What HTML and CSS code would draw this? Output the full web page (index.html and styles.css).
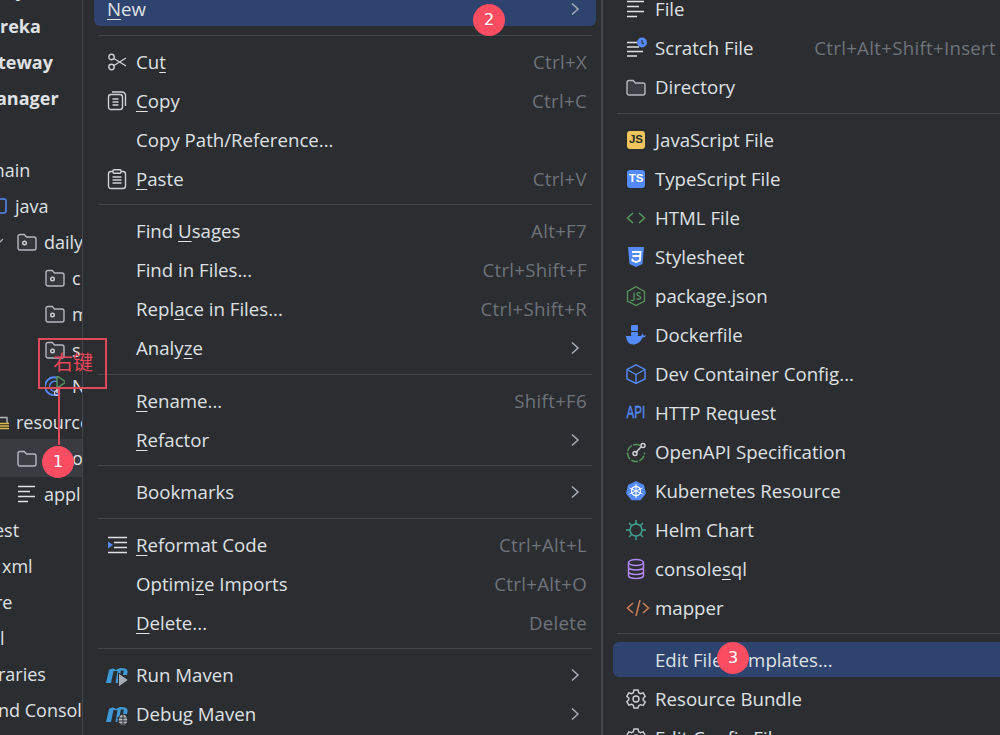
FILE: index.html
```html
<!DOCTYPE html>
<html lang="en">
<head>
<meta charset="utf-8">
<title>New file menu</title>
<link rel="stylesheet" href="styles.css">
</head>
<body>
<svg class="defs" width="0" height="0" aria-hidden="true">
  <symbol id="folder" viewBox="0 0 20 20"><path d="M1 5.500A2 2 0 0 1 3 3.500h4.200l2.300 2.500H17a2 2 0 0 1 2 2v8a2 2 0 0 1-2 2H3a2 2 0 0 1-2-2z" fill="#3c3e43" stroke="#b4b8bf" stroke-width="1.400"/></symbol>
  <symbol id="pkg" viewBox="0 0 20 20"><path d="M1 4.500A2 2 0 0 1 3 2.500h4.200l2.300 2.500H17a2 2 0 0 1 2 2v9a2 2 0 0 1-2 2H3a2 2 0 0 1-2-2z" fill="#34363a" stroke="#b4b8bf" stroke-width="1.400"/><circle cx="7.500" cy="11" r="1.800" fill="none" stroke="#ced0d6" stroke-width="1.400"/></symbol>
  <symbol id="file" viewBox="0 0 20 20" stroke="#dfe1e5" stroke-width="1.500"><path d="M1 2.500h17M1 7.500h12M1 12.500h17M1 17.500h10"/></symbol>
  <symbol id="chev" viewBox="0 0 10 14"><path d="M2 1.500 8 7l-6 5.500" fill="none" stroke="#a8adb6" stroke-width="1.500"/></symbol>
</svg>

<div class="screen">
  <aside class="tree">
    <div class="node bold in-10">ly</div>
    <div class="node bold">reka</div>
    <div class="node bold out-2">teway</div>
    <div class="node bold out-4">anager</div>
    <div class="node"></div>
    <div class="node out-12">main</div>
    <div class="node javarow">
      <svg class="tree-ic" viewBox="0 0 20 20"><rect x="1" y="3" width="11" height="14" rx="2" fill="none" stroke="#548af7" stroke-width="1.500"/></svg>
      <span>java</span>
    </div>
    <div class="node d2">
      <svg class="tw" viewBox="0 0 10 14"><path d="M1 4l4 4 4-4" fill="none" stroke="#a8adb6" stroke-width="1.300"/></svg>
      <svg class="tree-ic"><use href="#pkg"/></svg><span>daily</span>
    </div>
    <div class="node d3"><svg class="tree-ic"><use href="#pkg"/></svg><span>c</span></div>
    <div class="node d3"><svg class="tree-ic"><use href="#pkg"/></svg><span>m</span></div>
    <div class="node d3"><svg class="tree-ic"><use href="#pkg"/></svg><span>s</span></div>
    <div class="node d3">
      <svg class="tree-ic" viewBox="0 0 20 20"><path d="M15 3.500A9 9 0 1 0 15 17" fill="none" stroke="#548af7" stroke-width="1.800"/><path d="M13 6.500A5 5 0 1 0 13 14" fill="none" stroke="#548af7" stroke-width="1.500"/><path d="M12 0l9 6-9 6z" fill="#2b2d30" stroke="#57965c" stroke-width="1.500"/><path d="M12 13v4" stroke="#ced0d6" stroke-width="1.500"/><circle cx="12" cy="17" r="2.500" fill="none" stroke="#ced0d6" stroke-width="1.200"/></svg>
      <span>N</span>
    </div>
    <div class="node resrow">
      <svg class="tree-ic" viewBox="0 0 20 20"><path d="M1 5.500h12v6" fill="none" stroke="#b4b8bf" stroke-width="1.400"/><path d="M1 11.500h14M1 14h14M1 16.500h14" stroke="#e0b94c" stroke-width="1.500"/></svg>
      <span>resource</span>
    </div>
    <div class="node d2 selected"><svg class="tree-ic"><use href="#folder"/></svg><span class="gap-o">o</span></div>
    <div class="node d2"><svg class="tree-ic"><use href="#file"/></svg><span>appl</span></div>
    <div class="node out-6">est</div>
    <div class="node in-2">xml</div>
    <div class="node out-5">re</div>
    <div class="node">l</div>
    <div class="node out-2">raries</div>
    <div class="node out-2">nd Consol</div>
  </aside>

  <section class="menu first">
    <div class="row hot"><span class="label"><u>N</u>ew</span><svg class="chev"><use href="#chev"/></svg></div>
    <div class="sep tall"></div>
    <div class="row">
      <svg class="ic" viewBox="0 0 20 20" fill="none" stroke="#ced0d6" stroke-width="1.400"><circle cx="4.500" cy="5" r="2.700"/><circle cx="4.500" cy="15" r="2.700"/><path d="M7 6.500 19 14M7 13.500 19 6"/></svg>
      <span class="label">Cu<u>t</u></span><span class="key">Ctrl+X</span>
    </div>
    <div class="row">
      <svg class="ic" viewBox="0 0 20 20" fill="none" stroke="#ced0d6" stroke-width="1.400"><rect x="1.500" y="3.500" width="14" height="15" rx="2.500"/><path d="M5 1h10a3.500 3.500 0 0 1 3.500 3.500V15M5.500 8h6M5.500 11h6M5.500 14h6"/></svg>
      <span class="label"><u>C</u>opy</span><span class="key">Ctrl+C</span>
    </div>
    <div class="row"><span class="spacer"></span><span class="label">Copy Path/Reference...</span></div>
    <div class="row">
      <svg class="ic" viewBox="0 0 20 20" fill="none" stroke="#ced0d6" stroke-width="1.400"><rect x="1.500" y="2.500" width="17" height="17" rx="2.500"/><rect x="6" y="0.800" width="8" height="3.500" rx="1" fill="#2b2d30"/><path d="M5.500 8h9M5.500 11h9M5.500 14h9"/></svg>
      <span class="label"><u>P</u>aste</span><span class="key">Ctrl+V</span>
    </div>
    <div class="sep"></div>
    <div class="row"><span class="spacer"></span><span class="label">Find <u>U</u>sages</span><span class="key">Alt+F7</span></div>
    <div class="row"><span class="spacer"></span><span class="label">Find in Files...</span><span class="key">Ctrl+Shift+F</span></div>
    <div class="row"><span class="spacer"></span><span class="label">Repl<u>a</u>ce in Files...</span><span class="key">Ctrl+Shift+R</span></div>
    <div class="row"><span class="spacer"></span><span class="label">Analy<u>z</u>e</span><svg class="chev"><use href="#chev"/></svg></div>
    <div class="sep tall"></div>
    <div class="row"><span class="spacer"></span><span class="label"><u>R</u>ename...</span><span class="key">Shift+F6</span></div>
    <div class="row"><span class="spacer"></span><span class="label"><u>R</u>efactor</span><svg class="chev"><use href="#chev"/></svg></div>
    <div class="sep"></div>
    <div class="row"><span class="spacer"></span><span class="label">Bookmarks</span><svg class="chev"><use href="#chev"/></svg></div>
    <div class="sep tall"></div>
    <div class="row">
      <svg class="ic" viewBox="0 0 20 20" stroke="#dfe1e5" stroke-width="1.500"><path d="M1 2.500h19M7 7.500h13M7 12.500h13M1 17.500h19"/><path d="M1 6.500l5 3.500-5 3.500z" fill="#548af7" stroke="none"/></svg>
      <span class="label"><u>R</u>eformat Code</span><span class="key">Ctrl+Alt+L</span>
    </div>
    <div class="row"><span class="spacer"></span><span class="label">Optimi<u>z</u>e Imports</span><span class="key">Ctrl+Alt+O</span></div>
    <div class="row"><span class="spacer"></span><span class="label"><u>D</u>elete...</span><span class="key">Delete</span></div>
    <div class="sep"></div>
    <div class="row">
      <svg class="ic" viewBox="0 0 20 20"><path d="M-1 18 2 5c3-2 5-2 7 0 3-2.500 6-2.500 9-1.500 2 .7 3 2 2.500 4L20 10h-4l.8-4.500h-3L12 18H8.500L10.500 6H6.500L4 18z" fill="#3d9ad6"/><path d="M11.500 8l10 7-10 7z" fill="#a8adb6" stroke="#2b2d30" stroke-width="1"/></svg>
      <span class="label">Run Maven</span><svg class="chev"><use href="#chev"/></svg>
    </div>
    <div class="row">
      <svg class="ic" viewBox="0 0 20 20"><path d="M-1 18 2 5c3-2 5-2 7 0 3-2.500 6-2.500 9-1.500 2 .7 3 2 2.500 4L20 10h-4l.8-4.500h-3L12 18H8.500L10.500 6H6.500L4 18z" fill="#3d9ad6"/><ellipse cx="16" cy="16" rx="4.800" ry="5.800" fill="#b4b8bf" stroke="#2b2d30" stroke-width="1"/><path d="M10 14h12M10 17h12M10 20h12M16 11v11" stroke="#2b2d30" stroke-width="1"/></svg>
      <span class="label">Debug Maven</span><svg class="chev"><use href="#chev"/></svg>
    </div>
  </section>

  <section class="menu second">
    <div class="row"><svg class="ic"><use href="#file"/></svg><span class="label">File</span></div>
    <div class="row">
      <svg class="ic" viewBox="0 0 20 20" stroke="#dfe1e5" stroke-width="1.500"><path d="M1 4.500h10M1 9h12M1 13.500h16M1 18h10"/><circle cx="16" cy="4.500" r="5" fill="#548af7" stroke="none"/><path d="M16 2v3l2 1" fill="none" stroke="#2b2d30" stroke-width="1.200"/></svg>
      <span class="label">Scratch File</span><span class="key">Ctrl+Alt+Shift+Insert</span>
    </div>
    <div class="row"><svg class="ic"><use href="#folder"/></svg><span class="label">Directory</span></div>
    <div class="sep tall"></div>
    <div class="row"><span class="chip js">JS</span><span class="label">JavaScript File</span></div>
    <div class="row"><span class="chip ts">TS</span><span class="label">TypeScript File</span></div>
    <div class="row">
      <svg class="ic" viewBox="0 0 20 20" fill="none" stroke="#57965c" stroke-width="1.600"><path d="M7 5 1.500 10 7 15M13 5l5.500 5-5.500 5"/></svg>
      <span class="label">HTML File</span>
    </div>
    <div class="row">
      <svg class="ic" viewBox="0 0 20 20"><path d="M2 0h16l-1.500 17L10 20l-6.500-3z" fill="#548af7"/><path d="M6 5h8.500l-.6 8.500L10 15l-3.500-1.300-.1-2M6.500 9H14" fill="none" stroke="#fff" stroke-width="1.800"/></svg>
      <span class="label">Stylesheet</span>
    </div>
    <div class="row">
      <svg class="ic" viewBox="0 0 20 20" fill="none" stroke="#57965c" stroke-width="1.300"><path d="M10 .8 18.500 5.500v9.500L10 19.500 1.500 15V5.500z"/><path d="M8 6.500v7c0 1.500-2.500 1.500-3 .3M14.500 7.500c-1-1.300-3.700-1-3.700.7 0 2.200 3.900 1.200 3.900 3.500 0 1.800-3 2-4.200.6"/></svg>
      <span class="label">package.json</span>
    </div>
    <div class="row">
      <svg class="ic" viewBox="0 0 20 20" fill="#548af7"><rect x="5" y="0" width="7" height="6" rx="1"/><rect x="5" y="7" width="7" height="4" rx="1"/><path d="M0 11h15c.5-1.500 1.500-2.500 2-2.500 .3 1 .3 1.500 .3 2h2.700c-.5 1.500-2 2-3.500 2C15 17 11 19.500 7 19.500 3 19.500 .5 16 0 11z"/></svg>
      <span class="label">Dockerfile</span>
    </div>
    <div class="row">
      <svg class="ic" viewBox="0 0 20 20" fill="none" stroke="#548af7" stroke-width="1.400"><path d="M10 .8 19 5.500V15L10 19.500 1 15V5.500zM1 5.500 10 10.500l9-5M10 10.500v9"/></svg>
      <span class="label">Dev Container Config...</span>
    </div>
    <div class="row"><span class="chip api"><span class="api-text">API</span></span><span class="label">HTTP Request</span></div>
    <div class="row">
      <svg class="ic" viewBox="0 0 20 20" fill="none" stroke-width="1.500"><path d="M14 3.500A8.500 8.500 0 1 0 18.500 10.500" stroke="#57965c" stroke-dasharray="7 1.500"/><path d="M9.500 11 15 5" stroke="#ced0d6"/><circle cx="9" cy="11.500" r="2" stroke="#ced0d6"/><circle cx="17" cy="3.500" r="2" stroke="#ced0d6"/></svg>
      <span class="label">OpenAPI Specification</span>
    </div>
    <div class="row">
      <svg class="ic" viewBox="0 0 20 20"><path d="M10 0 18 4l2 8.500-5.500 6.800h-9L0 12.500 2 4z" fill="#548af7"/><circle cx="10" cy="10" r="4.500" fill="none" stroke="#fff" stroke-width="1.300"/><path d="M10 3v14M3.500 7l13 6M3.500 13l13-6" stroke="#fff" stroke-width="1"/></svg>
      <span class="label">Kubernetes Resource</span>
    </div>
    <div class="row">
      <svg class="ic" viewBox="0 0 20 20" fill="none" stroke="#3fa190" stroke-width="1.500"><circle cx="10" cy="10" r="6"/><path d="M10 0v4M10 16v4M0 10h4M16 10h4M3 3l2.500 2.500M14.500 14.500 17 17M17 3l-2.500 2.500M5.500 14.500 3 17"/></svg>
      <span class="label">Helm Chart</span>
    </div>
    <div class="row">
      <svg class="ic" viewBox="0 0 20 20" fill="none" stroke="#b189f5" stroke-width="1.500"><ellipse cx="10" cy="3.500" rx="7.500" ry="3"/><path d="M2.500 3.500v13c0 1.700 3.400 3 7.500 3s7.500-1.300 7.500-3v-13M2.500 8c0 1.700 3.400 3 7.500 3s7.500-1.300 7.500-3M2.500 12.500c0 1.700 3.400 3 7.500 3s7.500-1.300 7.500-3"/></svg>
      <span class="label">console<u>s</u>ql</span>
    </div>
    <div class="row">
      <svg class="ic wide" viewBox="0 0 24 20" fill="none" stroke="#c77d55" stroke-width="1.600"><path d="M7 5 1.500 10 7 15M17 5l5.500 5-5.500 5M14 2 10 18"/></svg>
      <span class="label">mapper</span>
    </div>
    <div class="sep"></div>
    <div class="row hot"><span class="spacer"></span><span class="label">Edit File Templates...</span></div>
    <div class="row">
      <svg class="ic" viewBox="0 0 20 20" fill="none" stroke="#ced0d6" stroke-width="1.400"><path d="M8 1h4l.7 2.700 1.800 1 2.700-.8 2 3.400-2 2 0 1.800 2 2-2 3.400-2.700-.8-1.800 1L12 19H8l-.7-2.700-1.800-1-2.700.8-2-3.400 2-2V9L.800 7.300l2-3.400 2.700.8 1.800-1z"/><circle cx="10" cy="10" r="3"/></svg>
      <span class="label">Resource Bundle</span>
    </div>
    <div class="row">
      <svg class="ic" viewBox="0 0 20 20" fill="none" stroke="#ced0d6" stroke-width="1.400"><path d="M8 1h4l.7 2.700 1.800 1 2.700-.8 2 3.400-2 2 0 1.800 2 2-2 3.400-2.700-.8-1.800 1L12 19H8l-.7-2.700-1.800-1-2.700.8-2-3.400 2-2V9L.800 7.300l2-3.400 2.700.8 1.800-1z"/><circle cx="10" cy="10" r="3"/></svg>
      <span class="label">Edit Config File</span>
    </div>
  </section>

  <div class="callout">右键</div>
  <div class="leader"></div>
  <div class="badge b1">1</div>
  <div class="badge b2">2</div>
  <div class="badge b3">3</div>
</div>
</body>
</html>
```

FILE: styles.css
```css
* { box-sizing: border-box; }
html, body { margin: 0; height: 100%; background: #2b2d30; }
.defs { position: absolute; }
.screen {
  position: relative;
  display: flex;
  width: 1000px;
  height: 735px;
  overflow: hidden;
  background: #2b2d30;
  color: #dfe1e5;
  font: 18px/24px "Open Sans", "Noto Sans", sans-serif;
}

/* project tree */
.tree { flex: 0 0 82px; margin-top: -28px; overflow: hidden; }
.node { display: flex; align-items: center; height: 36px; white-space: nowrap; color: #dfe1e5; }
.bold { font-weight: 700; }
.in-10 { margin-left: 10px; }
.in-2 { margin-left: 2px; }
.out-2 { margin-left: -2px; }
.out-4 { margin-left: -4px; }
.out-5 { margin-left: -5px; }
.out-6 { margin-left: -6px; }
.out-12 { margin-left: -12px; }
.d2 { padding-left: 17px; position: relative; }
.d3 { padding-left: 45px; }
.node span { margin-left: 7px; }
.tree-ic { flex: none; width: 20px; height: 20px; }
.javarow .tree-ic { margin-left: -6px; }
.javarow span { margin-left: 1px; }
.resrow .tree-ic { margin-left: -6px; }
.resrow span { margin-left: 2px; }
.tw { position: absolute; left: -6px; top: 11px; width: 10px; height: 14px; }
.selected { background: #393b40; height: 38px; margin-block: -1px; }
.selected .gap-o { margin-left: 35px; }

/* menus */
.menu { display: flex; flex-direction: column; margin-top: -11px; font-size: 18.660px; }
.first { flex: 0 0 519px; border-left: 1px solid #43454a; padding-left: 11px; padding-right: 5px; }
.second { flex: 1; border-left: 2px solid #43454a; padding-left: 10px; min-width: 0; }
.row {
  flex: none;
  display: flex;
  align-items: center;
  gap: 9px;
  height: 35px;
  margin: 2px 0;
  padding: 0 9px 0 13px;
  border-radius: 6px;
  white-space: nowrap;
}
.second .row { margin-right: -12px; padding-right: 16px; }
.hot { background: #2e436e; }
.first .hot { border-radius: 0 0 6px 6px; }
.label { flex: 1; color: #dfe1e5; }
.key { color: #6f737a; letter-spacing: .3px; }
.spacer, .ic { flex: none; width: 20px; height: 20px; }
.ic { overflow: visible; }
.ic.wide { width: 24px; margin: 0 -4px 0 0; }
.chev { flex: none; width: 10px; height: 14px; margin-right: 13px; }
.first .row:has(.chev) { padding-right: 3px; }
u { text-underline-offset: 3px; text-decoration-thickness: 1px; }
.sep { flex: none; height: 13px; display: flex; align-items: center; margin: 0 4px; }
.sep.tall { height: 14px; }
.sep::before { content: ""; flex: 1; height: 1px; background: #43454a; }
.second .sep { margin-right: -12px; }

.chip {
  flex: none;
  display: flex;
  align-items: center;
  justify-content: center;
  width: 18px;
  height: 18px;
  margin: 0 1px;
  border-radius: 3px;
  font: 700 11.500px/1 "Liberation Sans", sans-serif;
}
.js { background: #f2c55c; color: #2b2d30; }
.ts { background: #548af7; color: #fff; }
.api { width: 20px; margin: 0; color: #548af7; }
.api-text { transform: scaleX(.72); font-size: 16px; font-weight: 400; -webkit-text-stroke: .4px #548af7; }

/* annotations */
.callout {
  position: absolute;
  left: 38px;
  top: 338px;
  width: 69px;
  height: 51px;
  padding: 9px 0 0 13px;
  border: 2px solid #dc4a5c;
  color: #e8475b;
  font: 20px/26px "Noto Sans CJK SC", sans-serif;
}
.leader { position: absolute; left: 58px; top: 389px; width: 2px; height: 56px; background: #dc4a5c; }
.badge {
  position: absolute;
  display: flex;
  align-items: center;
  justify-content: center;
  width: 32px;
  height: 32px;
  border-radius: 50%;
  background: #fb4d62;
  color: #fff;
  font: 16px/1 "DejaVu Sans", sans-serif;
}
.b1 { left: 42px; top: 446px; }
.b2 { left: 473px; top: 4px; }
.b3 { left: 717px; top: 642px; }
```
